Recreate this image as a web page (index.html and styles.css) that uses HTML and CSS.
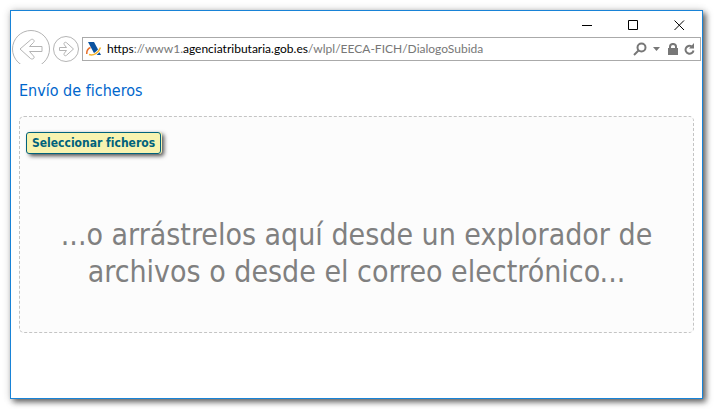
FILE: index.html
```html
<!DOCTYPE html>
<html lang="es">
<head>
  <meta charset="UTF-8">
  <title>Envío de ficheros</title>
  <link rel="stylesheet" href="styles.css">
</head>
<body>
  <div class="window">
    <div class="titlebar">
      <button type="button" aria-label="Minimizar">
        <svg width="11" height="11" viewBox="0 0 11 11"><path d="M0 5.5h10"/></svg>
      </button>
      <button type="button" aria-label="Maximizar">
        <svg width="11" height="11" viewBox="0 0 11 11"><path d="M.5.5h9v9h-9z"/></svg>
      </button>
      <button type="button" aria-label="Cerrar">
        <svg width="11" height="11" viewBox="0 0 11 11"><path d="M.5.5l9.500 9.500M10 .5L.5 10"/></svg>
      </button>
    </div>

    <div class="toolbar">
      <button type="button" class="nav-button back" aria-label="Atrás">
        <svg width="38" height="34" viewBox="0 0 38 34">
          <circle cx="19" cy="19" r="18.500"/>
          <path d="M30 16.500H17.500l4-4c2-2-1-4.500-3-2.500L8 19l10.500 9.500c2 1.500 5-.5 3-2.500l-4-4.500H30z"/>
        </svg>
      </button>
      <button type="button" class="nav-button" aria-label="Adelante">
        <svg width="26" height="26" viewBox="0 0 26 26">
          <circle cx="13" cy="13" r="12.500"/>
          <path d="M6.500 11.500h7l-2-2.500c-1.500-2 .5-3.500 2-2.300L20.500 13l-7 6.300c-1.500 1.200-3.500-.3-2-2.300l2-2.500h-7z"/>
        </svg>
      </button>
      <div class="address-bar">
        <svg class="site-logo" width="16" height="16" viewBox="0 0 16 16">
          <path d="M2 1h6l7 13H9z" fill="#0b53a0"/>
          <path d="M.8 13C.5 9.500 2 7.500 4.500 6.500" fill="none" stroke="#e8702a" stroke-width="1.500"/>
          <path d="M3.500 13.500c4 1.500 9-1.500 11-6.500" fill="none" stroke="#fff" stroke-width="3"/>
          <path d="M3 13.500c4.500 1.500 9.500-1.500 11.500-7" fill="none" stroke="#f7b52c" stroke-width="1.500"/>
        </svg>
        <div class="url" role="textbox" contenteditable="true" spellcheck="false" aria-label="Dirección"><b>https</b>://www1.<b>agenciatributaria.gob.es</b>/wlpl/EECA-FICH/DialogoSubida</div>
        <div class="address-actions">
          <button type="button" aria-label="Buscar">
            <svg width="14" height="14" viewBox="0 0 14 14"><circle cx="8.500" cy="5.500" r="4"/><path d="M5.500 8.500L1 13"/></svg>
          </button>
          <button type="button" aria-label="Mostrar historial">
            <svg width="7" height="4" viewBox="0 0 7 4"><path class="solid" d="M0 0h7L3.500 4z"/></svg>
          </button>
          <button type="button" class="lock" aria-label="Seguridad">
            <svg width="10" height="12" viewBox="0 0 10 12"><path class="solid" d="M0 5h10v7H0z"/><path d="M2 6V3.800C2 0 8 0 8 3.800V6"/></svg>
          </button>
          <button type="button" aria-label="Actualizar">
            <svg width="11" height="12" viewBox="0 0 11 12"><path d="M7.500 3.200A4 4 0 1 0 9.500 7.500"/><path class="solid" d="M10 0v5.500H5z"/></svg>
          </button>
        </div>
      </div>
    </div>

    <main>
      <h1>Envío de ficheros</h1>
      <div class="drop-zone">
        <button type="button" class="select-button">Seleccionar ficheros</button>
        <p>...o arrástrelos aquí desde un explorador de archivos o desde el correo electrónico...</p>
      </div>
    </main>
  </div>
</body>
</html>
```
FILE: styles.css
```css
* {
  box-sizing: border-box;
}
body {
  margin: 0;
  padding: 10px 11px 10px 10px;
  background: #fff;
  font-family: Tahoma, "DejaVu Sans Condensed", "DejaVu Sans", sans-serif;
}
.window {
  min-height: 389px;
  background: #fff;
  border: 1px solid #1883d7;
  box-shadow: 3px 3px 6px rgba(0, 0, 0, 0.6), 0 0 8px rgba(0, 0, 0, 0.15);
}
button {
  padding: 0;
  border: none;
  background: none;
  cursor: pointer;
}
svg {
  display: block;
  fill: none;
}
.titlebar {
  display: flex;
  justify-content: flex-end;
  height: 19px;
  padding-top: 9px;
}
.titlebar button {
  display: flex;
  justify-content: center;
  width: 46px;
}
.titlebar svg {
  stroke: #000;
}
.toolbar {
  display: flex;
  align-items: center;
  gap: 3px;
  height: 38px;
  padding: 0 1px;
}
.back {
  align-self: flex-start;
}
.nav-button svg {
  stroke: #b4b4b4;
}
.address-bar {
  display: flex;
  flex: 1;
  align-items: center;
  height: 24px;
  padding: 0 5px 0 3px;
  border: 1px solid #aaa;
}
.url {
  flex: 1;
  margin-left: 5px;
  color: #777;
  font-family: "Segoe UI", Lato, sans-serif;
  font-size: 12px;
  line-height: 20px;
  white-space: nowrap;
  outline: none;
}
.url b {
  color: #000;
  font-weight: normal;
}
.address-actions {
  display: flex;
  align-items: center;
  gap: 6px;
}
.address-actions svg {
  stroke: #777;
  stroke-width: 2;
}
.address-actions .solid {
  fill: #777;
  stroke: none;
}
.lock {
  margin-left: 2px;
}
main {
  padding: 13px 8px;
}
h1 {
  margin: 0 0 15px;
  color: #06c;
  font-size: 16px;
  font-weight: normal;
  line-height: 20px;
}
.drop-zone {
  min-height: 217px;
  padding: 15px 6px;
  background: #fcfcfc;
  border: 1px dashed #c4c4c4;
  border-radius: 5px;
}
.select-button {
  display: block;
  height: 22px;
  padding: 0 5px;
  background: #f7f3b0;
  border: 1px solid #00627c;
  border-radius: 3px;
  box-shadow: 1px 0 #f7f3b0, 3px 2px 4px rgba(0, 0, 0, 0.7);
  color: #00627c;
  font-family: inherit;
  font-size: 12px;
  font-weight: bold;
}
.drop-zone p {
  margin: 62px 24px 0;
  color: #808080;
  font-size: 30px;
  line-height: 37px;
  text-align: center;
}
```
